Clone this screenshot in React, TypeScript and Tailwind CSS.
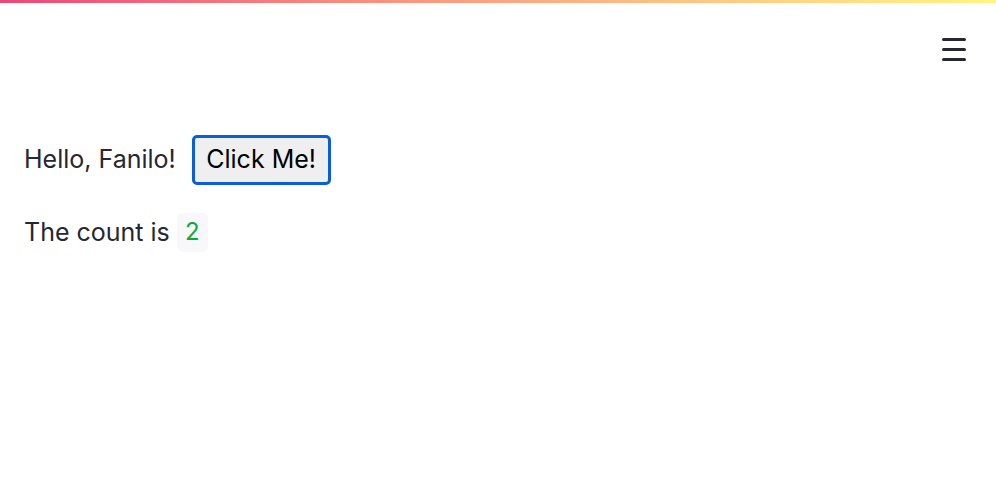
import React, { useState } from 'react';

const App: React.FC = () => {
  const [count, setCount] = useState(2);

  return (
    <div className="w-[996px] h-[492px] bg-white overflow-hidden relative font-['Inter',sans-serif] text-[#262730]">
      {/* Decoration bar */}
      <div className="h-[3px] w-full bg-gradient-to-r from-[#ec4577] to-[#fff584]" />

      {/* Header */}
      <div className="flex justify-end pr-[30px] pt-[34px]">
        <button className="flex flex-col gap-[7.5px] w-[24px] py-[1px]">
          <span className="block h-[2.5px] w-full bg-[#262730] rounded-sm" />
          <span className="block h-[2.5px] w-full bg-[#262730] rounded-sm" />
          <span className="block h-[2.5px] w-full bg-[#262730] rounded-sm" />
        </button>
      </div>

      {/* Main */}
      <div className="pl-[24px] pt-[73px] flex flex-col gap-[28px]">
        <div className="flex items-center gap-[16px]">
          <span className="text-[25px] leading-none">Hello, Fanilo!</span>
          <button
            onClick={() => setCount(count + 1)}
            className="h-[50px] px-[11.5px] rounded-[5px] border-[3px] border-[#0a5fd6] bg-[#efefef] text-black text-[25px] leading-none font-['Inter',sans-serif]"
          >
            Click Me!
          </button>
        </div>
        <div className="flex items-center gap-[7px]">
          <span className="text-[25px] leading-none">The count is</span>
          <span className="h-[39px] w-[31px] justify-center flex items-center rounded-[6px] bg-[#f8f8fa] text-[#09ab3b] text-[24px] leading-none">
            {count}
          </span>
        </div>
      </div>
    </div>
  );
};

export default App;
